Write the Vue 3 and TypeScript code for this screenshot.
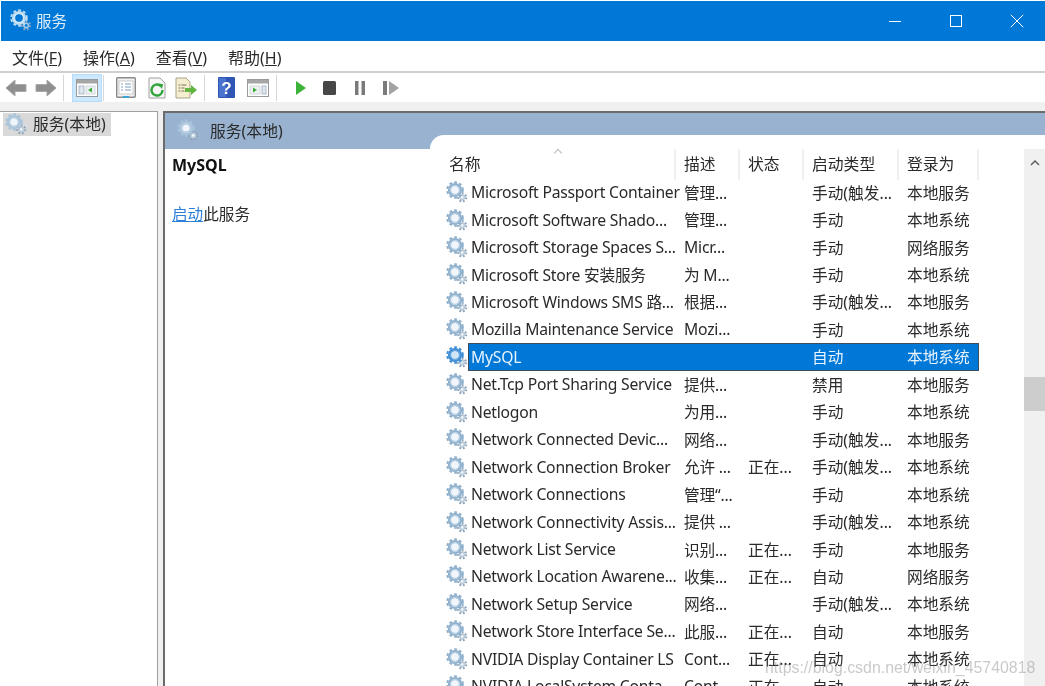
<script setup lang="ts">
interface Row { name: string; desc: string; status: string; type: string; logon: string }
const r = (name: string, desc: string, status: string, type: string, logon: string): Row => ({ name, desc, status, type, logon })
const rows: Row[] = [
  r('Microsoft Passport Container', '管理...', '', '手动(触发...', '本地服务'),
  r('Microsoft Software Shado...', '管理...', '', '手动', '本地系统'),
  r('Microsoft Storage Spaces S...', 'Micr...', '', '手动', '网络服务'),
  r('Microsoft Store 安装服务', '为 M...', '', '手动', '本地系统'),
  r('Microsoft Windows SMS 路...', '根据...', '', '手动(触发...', '本地服务'),
  r('Mozilla Maintenance Service', 'Mozi...', '', '手动', '本地系统'),
  r('MySQL', '', '', '自动', '本地系统'),
  r('Net.Tcp Port Sharing Service', '提供...', '', '禁用', '本地服务'),
  r('Netlogon', '为用...', '', '手动', '本地系统'),
  r('Network Connected Devic...', '网络...', '', '手动(触发...', '本地服务'),
  r('Network Connection Broker', '允许 ...', '正在...', '手动(触发...', '本地系统'),
  r('Network Connections', '管理“...', '', '手动', '本地系统'),
  r('Network Connectivity Assis...', '提供 ...', '', '手动(触发...', '本地系统'),
  r('Network List Service', '识别...', '正在...', '手动', '本地服务'),
  r('Network Location Awarene...', '收集...', '正在...', '自动', '网络服务'),
  r('Network Setup Service', '网络...', '', '手动(触发...', '本地系统'),
  r('Network Store Interface Se...', '此服...', '正在...', '自动', '本地服务'),
  r('NVIDIA Display Container LS', 'Cont...', '正在...', '自动', '本地系统'),
  r('NVIDIA LocalSystem Conta...', 'Cont...', '正在...', '自动', '本地系统'),
]
const menus = [['文件(', 'F', ')'], ['操作(', 'A', ')'], ['查看(', 'V', ')'], ['帮助(', 'H', ')']]
const columns = ['描述', '状态', '启动类型', '登录为']
</script>

<template>
  <div class="win">
    <svg class="defs" width="0" height="0">
      <symbol id="gear" viewBox="0 0 22 22">
        <circle cx="16.2" cy="16.4" r="3.8" fill="none" stroke="#8ea3b8" stroke-width="2.4" stroke-dasharray="1.7 1.7" />
        <circle cx="16.2" cy="16.4" r="3" class="small" />
        <circle cx="16.2" cy="16.4" r="1.3" class="hole" />
        <circle cx="9" cy="9" r="7.8" fill="none" stroke="currentColor" stroke-width="2" stroke-dasharray="2.8 2.3" />
        <circle cx="9" cy="9" r="5.4" fill="none" stroke="currentColor" stroke-width="3.4" />
        <circle cx="9" cy="9" r="4.6" fill="none" class="ring" stroke-width="1.2" />
        <circle cx="9" cy="9" r="3.6" class="hole" />
      </symbol>
    </svg>

    <header class="title">
      <svg class="title-gear"><use href="#gear" /></svg>
      <span>服务</span>
      <div class="controls">
        <svg width="14" height="14" viewBox="0 0 14 14"><path d="M1 7.500h12" stroke="#fff" fill="none" /></svg>
        <svg width="14" height="14" viewBox="0 0 14 14"><rect x="1.500" y="1.500" width="11" height="11" stroke="#fff" fill="none" /></svg>
        <svg width="14" height="14" viewBox="0 0 14 14"><path d="M.8.8l12.400 12.400M13.200.8L.8 13.200" stroke="#fff" fill="none" /></svg>
      </div>
    </header>

    <nav class="menu">
      <span v-for="m in menus" :key="m[1]">{{ m[0] }}<u>{{ m[1] }}</u>{{ m[2] }}</span>
    </nav>

    <div class="toolbar">
      <svg class="back" width="22" height="20" viewBox="0 0 22 20"><path d="M1 10L10 2v4.500h11v7H10V18z" fill="#8f8f8f" stroke="#a8a8a8" /></svg>
      <svg class="fwd" width="22" height="20" viewBox="0 0 22 20"><path d="M21 10l-9-8v4.500H1v7h11V18z" fill="#8f8f8f" stroke="#a8a8a8" /></svg>
      <i class="sep s1"></i>
      <div class="selected">
        <svg width="22" height="20" viewBox="0 0 22 20"><rect x=".5" y="1.500" width="21" height="17" fill="#fff" stroke="#9a9a9a" /><rect x="1" y="2" width="20" height="3.500" fill="#a6a6a6" /><rect x="3" y="8" width="5" height="8" fill="#dfe6ee" stroke="#8fa3b8" stroke-width=".7" /><rect x="10" y="8" width="9" height="8" fill="#edf1f4" stroke="#c3c9cf" stroke-width=".7" /><path d="M16 9.500v5L12 12z" fill="#3cab3c" /></svg>
      </div>
      <i class="sep s2"></i>
      <svg class="i3" width="20" height="22" viewBox="0 0 20 22"><rect x=".7" y=".7" width="18.600" height="19.600" rx="1" fill="#f2f2f2" stroke="#8a8a8a" stroke-width="1.400" /><rect x="3" y="4" width="14" height="13" fill="#fff" stroke="#b9b9b9" stroke-width=".7" /><path d="M5 7h2m2 0h6M5 10h2m2 0h6M5 13h2m2 0h6" stroke="#7d9ec2" /><rect x="7" y="19" width="6" height="2" fill="#38a4d8" /></svg>
      <svg class="i4" width="18" height="22" viewBox="0 0 18 22"><path d="M1 1h11l5 5v15H1z" fill="#f6f6f6" stroke="#a0a0a0" /><path d="M14.500 13a5.500 5.500 0 1 1-2-4.200" fill="none" stroke="#2fa53a" stroke-width="2.400" /><path d="M9.500 6.500l5.500.5-1 5z" fill="#2fa53a" /></svg>
      <svg class="i5" width="22" height="22" viewBox="0 0 22 22"><path d="M1 1h10l4 4v16H1z" fill="#f5efcf" stroke="#a8a38a" /><path d="M3.500 8h2m1 0h5M3.500 11h2m1 0h3M3.500 14h2m1 0h3" stroke="#77745f" /><path d="M10 11h6V8l6 5-6 5v-3h-6z" fill="#62b53e" /></svg>
      <i class="sep s3"></i>
      <svg class="i6" width="17" height="21" viewBox="0 0 17 21"><rect width="17" height="21" rx="1" fill="#2f55b5" /><rect x="1" y="1" width="7" height="19" fill="#4a72cf" /><text x="8.500" y="16.500" class="q">?</text></svg>
      <svg class="i7" width="22" height="20" viewBox="0 0 22 20"><rect x=".5" y="1.500" width="21" height="17" fill="#fff" stroke="#9a9a9a" /><rect x="1" y="2" width="20" height="3.500" fill="#a6a6a6" /><rect x="3" y="8" width="10" height="8" fill="#edf1f4" stroke="#c3c9cf" stroke-width=".7" /><rect x="15" y="8" width="4" height="8" fill="#dfe6ee" stroke="#8fa3b8" stroke-width=".7" /><path d="M6 9.500v5l4-2.500z" fill="#3cab3c" /></svg>
      <i class="sep s4"></i>
      <svg class="i8" width="10" height="14" viewBox="0 0 10 14"><path d="M0 0l10 7-10 7z" fill="#3cb43c" /></svg>
      <svg class="i9" width="13" height="14" viewBox="0 0 13 14"><rect width="13" height="14" rx="1.500" fill="#474747" /></svg>
      <svg class="i10" width="10" height="14" viewBox="0 0 10 14"><path d="M0 0h3.500v14H0zm6.500 0H10v14H6.500z" fill="#7b7b7b" /></svg>
      <svg class="i11" width="16" height="14" viewBox="0 0 16 14"><path d="M0 0h4v14H0z" fill="#7b7b7b" /><path d="M6 0l10 7-10 7z" fill="#a2a2a2" /></svg>
    </div>

    <main class="panes">
      <aside class="tree">
        <div class="tree-item">
          <svg class="gear-sm"><use href="#gear" /></svg>
          <span>服务(本地)</span>
        </div>
      </aside>

      <section class="detail">
        <div class="detail-head">
          <svg class="gear-sm"><use href="#gear" /></svg>
          <span>服务(本地)</span>
        </div>
        <div class="detail-body">
          <div class="info">
            <h2>MySQL</h2>
            <p><a>启动</a>此服务</p>
          </div>
          <div class="list">
            <div class="table">
              <div class="thead">
                <div class="th name-th">名称<span class="caret"></span></div>
                <div v-for="c in columns" :key="c" class="th">{{ c }}</div>
              </div>
              <div v-for="row in rows" :key="row.name" class="row" :class="{ active: row.name === 'MySQL' }">
                <svg class="gear"><use href="#gear" /></svg>
                <div class="cells">
                  <span class="c-name">{{ row.name }}</span>
                  <span class="c-desc">{{ row.desc }}</span>
                  <span class="c-status">{{ row.status }}</span>
                  <span class="c-type">{{ row.type }}</span>
                  <span class="c-logon">{{ row.logon }}</span>
                </div>
              </div>
            </div>
            <div class="scrollbar">
              <svg width="10" height="6" viewBox="0 0 10 6"><path d="M1 5l4-4 4 4" fill="none" stroke="#606060" stroke-width="1.500" /></svg>
              <div class="thumb"></div>
            </div>
          </div>
        </div>
      </section>
    </main>

    <div class="watermark">https://blog.csdn.net/weixin_45740818</div>
  </div>
</template>

<style>
html, body { margin: 0; background: #fff; overflow: hidden; }
</style>

<style scoped>
.win {
  position: relative;
  width: 1045px;
  height: 686px;
  overflow: hidden;
  background: #fff;
  color: #2a2a2a;
  font-family: "Noto Sans", "Noto Sans CJK SC", sans-serif;
  font-size: 15.7px;
  filter: blur(0.6px);
  --hole: #f0f6fb;
  --small: #bccbd9;
  --ring: #b9d2e6;
}
.hole { fill: var(--hole); }
.small { fill: var(--small); }
.ring { stroke: var(--ring); }
.defs { position: absolute; }
.title {
  height: 40px;
  margin: 1px 0 0 1px;
  padding: 0 0 2px 9px;
  box-sizing: border-box;
  background: #0078d7;
  color: #dfeefa;
  display: flex;
  align-items: center;
  font-size: 15.5px;
}
.title-gear {
  width: 22px;
  height: 22px;
  margin-right: 4px;
  color: #bcdcf2;
  --hole: #0078d7;
  --small: #9cc8ea;
  --ring: #d5e9f7;
}
.controls { margin-left: auto; display: flex; gap: 47px; padding: 2px 21px 0 0; }
.menu {
  height: 29px;
  display: flex;
  gap: 21px;
  padding: 1px 0 0 12px;
  align-items: center;
  border-bottom: 2px solid #d0d0d0;
  font-size: 16px;
}
.toolbar {
  height: 29px;
  display: flex;
  align-items: center;
  padding-left: 5px;
  box-sizing: border-box;
}
.sep { display: block; width: 1px; height: 26px; background: #d6d6d6; }
.fwd { margin-left: 8px; }
.s1 { margin-left: 6px; }
.selected {
  width: 30px;
  height: 28px;
  margin-left: 8px;
  background: #cce8ff;
  border: 1px solid #b5dcfa;
  box-sizing: border-box;
  display: flex;
  align-items: center;
  justify-content: center;
}
.s2 { margin-left: 1px; }
.i3 { margin-left: 12px; }
.i4 { margin-left: 12px; }
.i5 { margin-left: 9px; }
.s3 { margin-left: 7px; }
.i6 { margin-left: 13px; }
.i7 { margin-left: 12px; }
.s4 { margin-left: 7px; }
.i8 { margin-left: 19px; }
.i9 { margin-left: 17px; }
.i10 { margin-left: 19px; }
.i11 { margin-left: 18px; }
.q { fill: #fff; font-size: 17px; font-weight: 700; text-anchor: middle; font-family: "Liberation Sans", sans-serif; }
.panes {
  background: #f0f0f0;
  padding-top: 9px;
  height: 585px;
  box-sizing: border-box;
  display: flex;
}
.tree {
  width: 158px;
  background: #fff;
  border-top: 1px solid #a0a0a0;
  border-right: 1px solid #a0a0a0;
  padding: 1px 0 0 3px;
  box-sizing: border-box;
  flex: none;
}
.tree-item {
  width: 108px;
  height: 23px;
  background: #d9d9d9;
  display: flex;
  align-items: center;
  gap: 6px;
  padding: 0 0 2px 2px;
  box-sizing: border-box;
  white-space: nowrap;
  font-size: 15.8px;
}
.gear-sm { width: 22px; height: 22px; color: #a9c3da; flex: none; }
.detail {
  margin-left: 5px;
  flex: 1;
  min-width: 0;
  border-top: 2px solid #6b6b6b;
  border-left: 2px solid #6b6b6b;
  display: flex;
  flex-direction: column;
  background: #fff;
}
.detail-head {
  height: 36px;
  background: #98b2d0;
  display: flex;
  align-items: center;
  gap: 11px;
  padding: 0 0 2px 12px;
  box-sizing: border-box;
  font-size: 15.8px;
  flex: none;
}
.detail-body { flex: 1; display: flex; min-height: 0; }
.info { width: 265px; flex: none; padding-left: 7px; box-sizing: border-box; }
.info h2 { margin: 5px 0 0; font-size: 16px; font-weight: 700; line-height: 22px; color: #111; }
.info p { margin: 27px 0 0; font-size: 15.6px; line-height: 22px; }
.info a { color: #2a7fd8; text-decoration: underline; }
.list {
  flex: 1;
  margin-top: -14px;
  background: #fff;
  border-top-left-radius: 14px;
  display: flex;
  min-width: 0;
  overflow: hidden;
}
.table { width: 594px; padding-left: 15px; box-sizing: border-box; flex: none; }
.thead {
  display: grid;
  grid-template-columns: 231px 64px 64px 95px 80px;
  height: 43.4px;
  padding-top: 14px;
  box-sizing: border-box;
  font-size: 15.8px;
}
.th {
  position: relative;
  padding-left: 8px;
  line-height: 31px;
  border-right: 2px solid #efefef;
  white-space: nowrap;
}
.name-th { padding-left: 4px; }
.caret {
  position: absolute;
  left: 110px;
  top: 1px;
  width: 5px;
  height: 5px;
  border-left: 1px solid #bbb;
  border-top: 1px solid #bbb;
  transform: rotate(45deg);
}
.row {
  height: 27.46px;
  display: flex;
  align-items: center;
  white-space: nowrap;
}
.gear { width: 22px; height: 22px; margin-left: 1px; color: #8fb0cc; flex: none; }
.cells {
  display: grid;
  grid-template-columns: 208px 64px 64px 95px 80px;
  align-items: center;
  height: 100%;
  flex: none;
  box-sizing: border-box;
}
.cells span { padding-left: 8px; }
.cells .c-name { padding-left: 3px; }
.c-name { letter-spacing: -0.22px; }
.c-desc { letter-spacing: -0.2px; }
.active .gear { color: #3e8ed6; --hole: #cfe4f5; --ring: #6aa9e0; }
.active .cells {
  background: #0078d7;
  color: #e8f3fc;
  outline: 1px solid #3d4d5c;
  outline-offset: -1px;
}
.scrollbar {
  width: 21px;
  margin-top: 14px;
  background: #f0f0f0;
  display: flex;
  flex-direction: column;
  align-items: center;
  padding-top: 11px;
  box-sizing: border-box;
}
.thumb {
  width: 100%;
  height: 34px;
  margin-top: 211px;
  background: #cdcdcd;
}
.watermark {
  position: absolute;
  left: 765px;
  top: 659px;
  font-family: "Liberation Sans", sans-serif;
  font-size: 15.9px;
  color: rgba(120, 120, 120, 0.4);
  white-space: nowrap;
}
</style>
